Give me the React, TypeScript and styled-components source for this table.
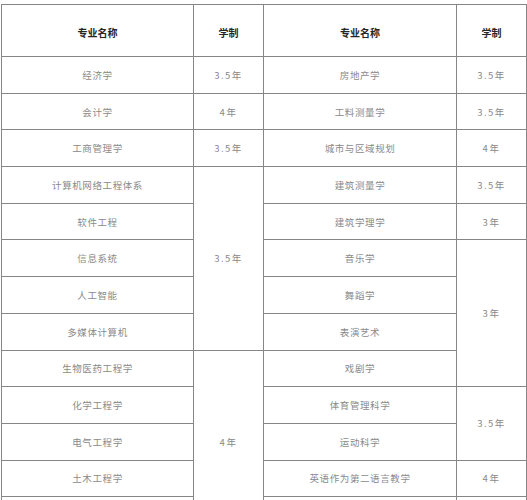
import React from "react";
import styled, { createGlobalStyle } from "styled-components";

const GlobalStyle = createGlobalStyle`
  html, body {
    margin: 0;
    padding: 0;
    background: #ffffff;
    overflow: hidden;
  }
  body {
    font-family: "Noto Sans CJK SC", "Noto Sans", sans-serif;
  }
`;

const Page = styled.div`
  padding: 4px 0 0 1px;
`;

const Table = styled.table`
  width: 525px;
  border-collapse: collapse;
  table-layout: fixed;
`;

const HeadCell = styled.th`
  height: 52px;
  padding: 4px 0 0;
  border: 1px solid #868686;
  font-size: 10px;
  font-weight: 700;
  color: #262626;
  text-align: center;
  vertical-align: middle;
  box-sizing: border-box;
`;

const Cell = styled.td<{ $years?: boolean }>`
  height: 36.7px;
  padding: 0;
  border: 1px solid #868686;
  font-size: 9.5px;
  font-weight: 400;
  letter-spacing: ${(p) => (p.$years ? "1.5px" : "0.6px")};
  color: #8a8a8a;
  text-align: center;
  vertical-align: middle;
  box-sizing: border-box;
`;

type Entry = { name: string; years?: string; span?: number };

// left and right halves share rows but merge their 学制 cells differently
const left: Entry[] = [
  { name: "经济学", years: "3.5年" },
  { name: "会计学", years: "4年" },
  { name: "工商管理学", years: "3.5年" },
  { name: "计算机网络工程体系", years: "3.5年", span: 5 },
  { name: "软件工程" },
  { name: "信息系统" },
  { name: "人工智能" },
  { name: "多媒体计算机" },
  { name: "生物医药工程学", years: "4年", span: 5 },
  { name: "化学工程学" },
  { name: "电气工程学" },
  { name: "土木工程学" },
  { name: "" },
];

const right: Entry[] = [
  { name: "房地产学", years: "3.5年" },
  { name: "工料测量学", years: "3.5年" },
  { name: "城市与区域规划", years: "4年" },
  { name: "建筑测量学", years: "3.5年" },
  { name: "建筑学理学", years: "3年" },
  { name: "音乐学", years: "3年", span: 4 },
  { name: "舞蹈学" },
  { name: "表演艺术" },
  { name: "戏剧学" },
  { name: "体育管理科学", years: "3.5年", span: 2 },
  { name: "运动科学" },
  { name: "英语作为第二语言教学", years: "4年" },
  { name: "", years: "" },
];

const App: React.FC = () => {
  return (
    <Page>
      <GlobalStyle />
      <Table>
        <colgroup>
          <col style={{ width: 192 }} />
          <col style={{ width: 70 }} />
          <col style={{ width: 193 }} />
          <col style={{ width: 70 }} />
        </colgroup>
        <thead>
          <tr>
            <HeadCell>专业名称</HeadCell>
            <HeadCell>学制</HeadCell>
            <HeadCell>专业名称</HeadCell>
            <HeadCell>学制</HeadCell>
          </tr>
        </thead>
        <tbody>
          {left.map((l, i) => {
            const r = right[i];
            return (
              <tr key={i}>
                <Cell>{l.name}</Cell>
                {l.years !== undefined && (
                  <Cell $years rowSpan={l.span ?? 1}>
                    {l.years}
                  </Cell>
                )}
                <Cell>{r.name}</Cell>
                {r.years !== undefined && (
                  <Cell $years rowSpan={r.span ?? 1}>
                    {r.years}
                  </Cell>
                )}
              </tr>
            );
          })}
        </tbody>
      </Table>
    </Page>
  );
};

export default App;
